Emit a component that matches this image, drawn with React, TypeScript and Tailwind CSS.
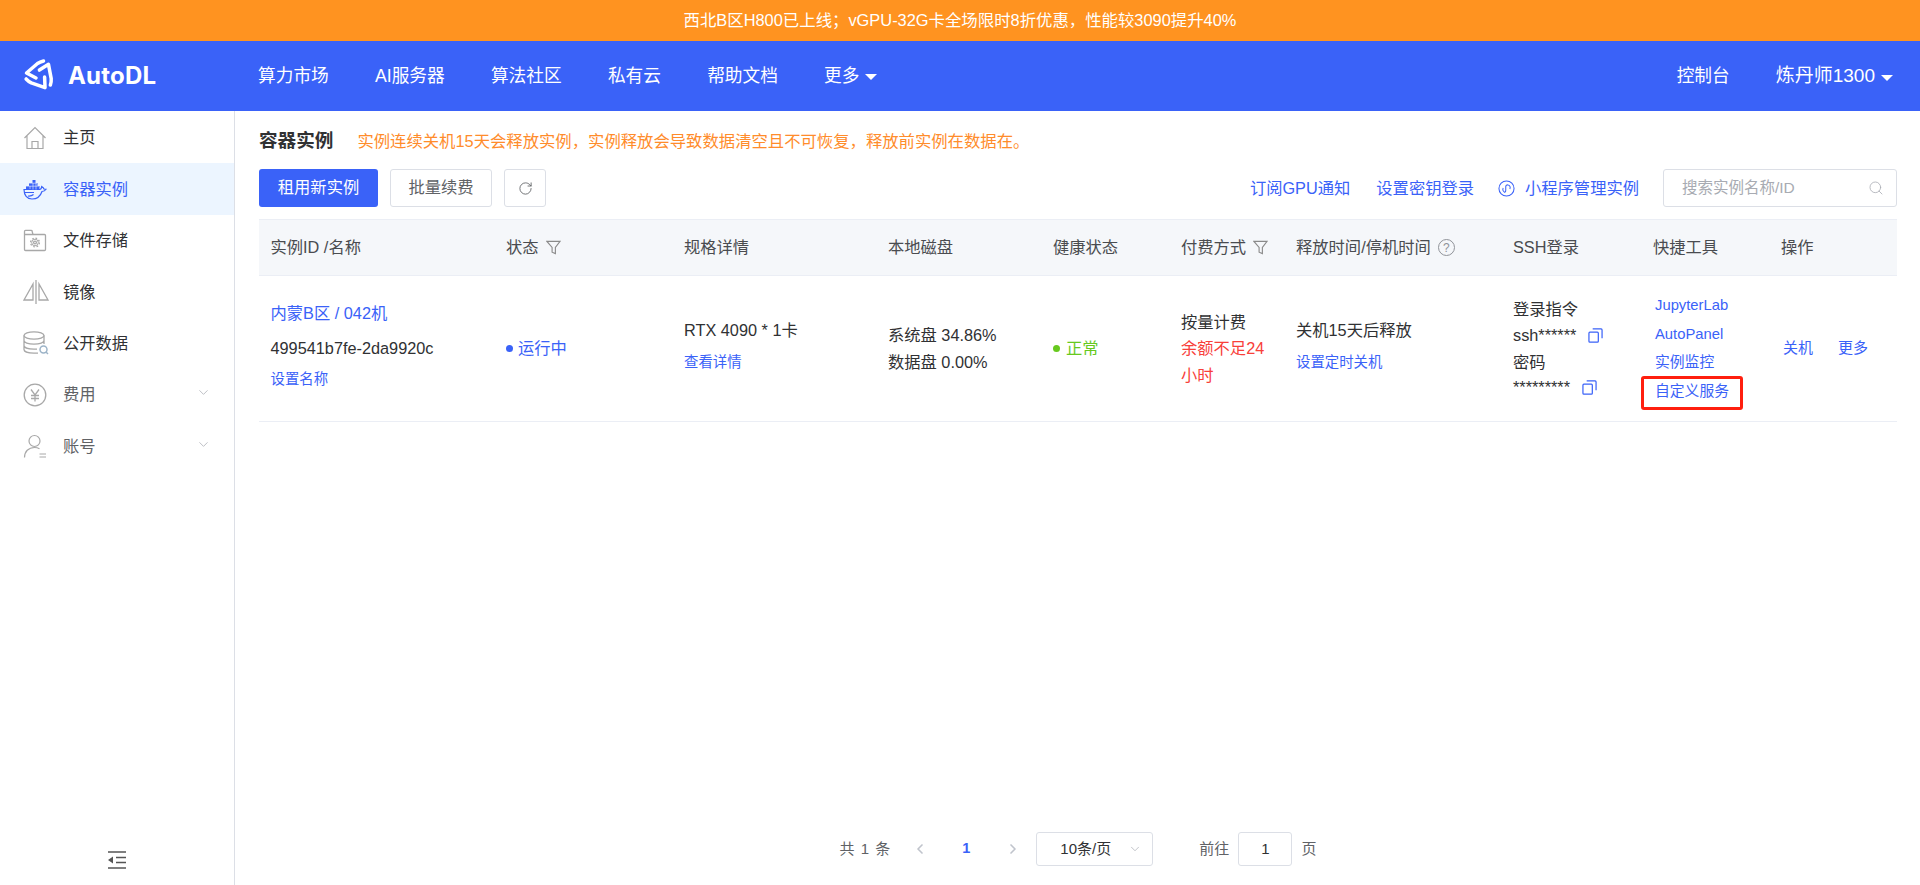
import { ChevronDown, ChevronLeft, ChevronRight, RotateCw, Search } from "lucide-react"
import type { ReactNode } from "react"

const font = "font-['Liberation_Sans','Noto_Sans_CJK_SC',sans-serif]"

const blade = "M14 20 L4.500 15 L15.500 5.500 Q18 3.800 21.500 3"

function Logo() {
  return (
    <svg viewBox="0 0 36 36" className="w-[36px] h-[36px]" fill="none" stroke="#fff" strokeWidth="3.500" strokeLinejoin="round" strokeLinecap="round">
      <path d={blade} />
      <path d={blade} transform="rotate(120 18 17)" />
      <path d={blade} transform="rotate(240 18 17)" />
    </svg>
  )
}

function HomeIcon() {
  return (
    <svg viewBox="0 0 24 24" className="w-[24px] h-[24px]" fill="none" stroke="#a8a8a8" strokeWidth="1.2">
      <path d="M1.500 12 12 1.500 22.500 12M4 10v12.500h16V10M9 22.500v-7h6v7" />
    </svg>
  )
}

function DockerIcon() {
  return (
    <svg viewBox="0 0 24 24" className="w-[24px] h-[24px]" fill="none" stroke="#3a62f8" strokeWidth="1.2">
      <path d="M1 12.500h15.500c1.300 0 2-1 2.200-3 1 .5 2 1.500 2.300 2.500l2 .3c-1 1.700-2.500 2.200-4 2.200C17.500 19 13.500 22 9 22 4 22 1 18 1 12.500Z" />
      <path d="M2 15.500h9M5 19c2 .2 4-.2 5.500-1.500" />
      <path d="M9.500 3h3v3h2v3h2v3.500H3V9h3V6h3.500Z" fill="#3a62f8" stroke="none" />
      <path d="M3 9.200h13M6 6.200h8M7 9v3M10 6v6.500M13 6v6.500" stroke="#ecf5ff" strokeWidth="0.6" />
    </svg>
  )
}

function FolderIcon() {
  return (
    <svg viewBox="0 0 24 24" className="w-[24px] h-[24px]" fill="none" stroke="#a8a8a8" strokeWidth="1.3">
      <path d="M1.500 3.500V21.500c0 .6.400 1 1 1h19c.6 0 1-.4 1-1V7.500c0-.6-.4-1-1-1H10L9 3c0-.4-.4-.7-.8-.7H2.500c-.6 0-1 .5-1 1.200ZM1.500 6.500H10" />
      <circle cx="12" cy="14.500" r="1.400" />
      <circle cx="12" cy="14.500" r="3.300" strokeWidth="1" />
      <circle cx="12" cy="14.500" r="4.400" strokeWidth="1.300" strokeDasharray="1.700 1.750" />
    </svg>
  )
}

function MirrorIcon() {
  return (
    <svg viewBox="0 0 26 24" className="w-[26px] h-[24px]" fill="none" stroke="#a8a8a8" strokeWidth="1.3">
      <path d="M13 0v24M10 4v16H1ZM16 4v16h9Z" />
    </svg>
  )
}

function DataIcon() {
  return (
    <svg viewBox="0 0 26 24" className="w-[26px] h-[24px]" fill="none" stroke="#a8a8a8" strokeWidth="1.3">
      <ellipse cx="11" cy="4.500" rx="10" ry="3.700" />
      <path d="M1 4.500v14c0 2 4 3.700 10 3.700h4M21 4.500V13M1 9.500c0 2 4 3.700 10 3.700s10-1.700 10-3.700M1 14.500c0 2 4 3.700 10 3.700h3" />
      <circle cx="20.500" cy="18.500" r="3.500" stroke="#9db4c8" strokeWidth="1.500" />
      <path d="M23 21l2 2" stroke="#9db4c8" strokeWidth="1.500" />
    </svg>
  )
}

function YuanIcon() {
  return (
    <svg viewBox="0 0 24 24" className="w-[24px] h-[24px]" fill="none" stroke="#a8a8a8" strokeWidth="1.3">
      <circle cx="12" cy="12" r="10.800" />
      <path d="M8 6.500l4 5.500 4-5.500M12 12v6.500M8 12.500h8M8 15.500h8" />
    </svg>
  )
}

function UserIcon() {
  return (
    <svg viewBox="0 0 24 24" className="w-[24px] h-[24px]" fill="none" stroke="#a8a8a8" strokeWidth="1.200">
      <circle cx="11.500" cy="7" r="5.500" />
      <path d="M1.500 23.500c0-6 4-10 10-10 2 0 3.500.4 5 1.200" />
      <path d="M16.500 20h6.500M16.500 23h6.500" strokeWidth="1" />
    </svg>
  )
}

function FilterIcon() {
  return (
    <svg viewBox="0 0 16 16" className="w-[15px] h-[15px] ml-[8px] -translate-x-[1px]" fill="none" stroke="#8a8a8a" strokeWidth="1.200">
      <path d="M1 1.500h14L10 8v6.500L6.500 13V8Z" />
    </svg>
  )
}

function CopyIcon() {
  return (
    <svg viewBox="0 0 16 16" className="w-[15px] h-[15px]" fill="none" stroke="#3a62f8" strokeWidth="1.300">
      <rect x="1" y="4.500" width="10" height="10.500" rx="1" />
      <path d="M5 1h9c.5 0 1 .5 1 1v9" />
    </svg>
  )
}

function MiniIcon() {
  return (
    <svg viewBox="0 0 18 18" className="w-[17px] h-[17px]" fill="none" stroke="#3a62f8" strokeWidth="1.100">
      <circle cx="9" cy="9" r="8" />
      <path d="M10.500 5c-1.500 0-2.300 1-2.300 2.200v3.600c0 1.300-.8 2.200-2 2.200M5.500 8.500C4.500 10 5.500 12.800 7.500 12.800M12.500 9.500c1-1.500 0-4.300-2-4.300" />
    </svg>
  )
}

function CollapseIcon() {
  return (
    <svg viewBox="0 0 20 18" className="w-[20px] h-[18px]" fill="none" stroke="#555" strokeWidth="1.500">
      <path d="M1 1h18M9 6.500h10M9 11.500h10M1 17h18" />
      <path d="M6 5.500v7L1 9Z" fill="#555" stroke="none" />
    </svg>
  )
}

const menu: { icon: ReactNode; label: string; active?: boolean; sub?: boolean }[] = [
  { icon: <HomeIcon />, label: "主页" },
  { icon: <DockerIcon />, label: "容器实例", active: true },
  { icon: <FolderIcon />, label: "文件存储" },
  { icon: <MirrorIcon />, label: "镜像" },
  { icon: <DataIcon />, label: "公开数据" },
  { icon: <YuanIcon />, label: "费用", sub: true },
  { icon: <UserIcon />, label: "账号", sub: true },
]

const navLinks = ["算力市场", "AI服务器", "算法社区", "私有云", "帮助文档"]

function Caret() {
  return <span className="ml-[6px] mt-[3px] inline-block border-x-[6px] border-t-[6px] border-x-transparent border-t-white" />
}

function Link({ children, className = "" }: { children: ReactNode; className?: string }) {
  return <a className={`text-[#3a62f8] ${className}`}>{children}</a>
}

export default function App() {
  return (
    <div className={`h-screen overflow-hidden flex flex-col bg-white text-[16.3px] text-[#303133] ${font}`}>
      <div className="h-[41px] shrink-0 bg-[#ff9320] flex items-center justify-center text-white text-[16.4px]">
        西北B区H800已上线；vGPU-32G卡全场限时8折优惠，性能较3090提升40%
      </div>

      <header className="h-[70px] shrink-0 bg-[#3a62f8] flex items-center text-white text-[17.7px]">
        <div className="w-[258px] pl-[22px] flex items-center gap-[10px]">
          <Logo />
          <span className="font-['Inter',sans-serif] font-bold text-[24px] tracking-[0.2px]">AutoDL</span>
        </div>
        <nav className="flex items-center gap-[46.200px]">
          {navLinks.map((item) => (
            <a key={item}>{item}</a>
          ))}
          <a className="flex items-center">
            更多
            <Caret />
          </a>
        </nav>
        <div className="ml-auto flex items-center pr-[27px] gap-[46px]">
          <a>控制台</a>
          <a className="flex items-center text-[19px]">
            炼丹师1300
            <Caret />
          </a>
        </div>
      </header>

      <div className="flex-1 flex min-h-0">
        <aside className="w-[235px] shrink-0 border-r border-[#dcdfe6] flex flex-col pt-[1px]">
          {menu.map((item) => (
            <div
              key={item.label}
              className={`h-[51.4px] flex items-center pl-[23px] pr-[23px] ${item.active ? "bg-[#ecf5ff] text-[#3a62f8]" : ""}`}
            >
              <span className="w-[40px] shrink-0">{item.icon}</span>
              <span className={item.sub ? "text-[#606266]" : ""}>{item.label}</span>
              {item.sub && <ChevronDown className="ml-auto w-[15px] h-[15px] -mt-[4px] text-[#a8abb2]" strokeWidth={1.2} />}
            </div>
          ))}
          <div className="mt-auto mb-[16px] flex justify-center">
            <CollapseIcon />
          </div>
        </aside>

        <main className="flex-1 min-w-0 flex flex-col pl-[24px] pr-[23px]">
          <div className="flex items-center h-[58px] pt-[2px]">
            <h1 className="font-bold text-[18.6px] text-[#303133]">容器实例</h1>
            <p className="ml-[24px] text-[#ff8c2b] text-[16.35px]">
              实例连续关机15天会释放实例，实例释放会导致数据清空且不可恢复，释放前实例在数据在。
            </p>
          </div>

          <div className="flex items-center h-[38px]">
            <button className="w-[119px] h-[38px] pb-[1px] rounded-[3px] bg-[#3a62f8] text-white text-[16.3px]">租用新实例</button>
            <button className="ml-[12px] w-[102px] h-[38px] pb-[1px] rounded-[3px] border border-[#dcdfe6] text-[#606266] text-[16.3px]">批量续费</button>
            <button className="ml-[12px] w-[42px] h-[38px] rounded-[3px] border border-[#dcdfe6] flex items-center justify-center text-[#606266]">
              <RotateCw className="w-[15px] h-[15px]" strokeWidth={1.4} />
            </button>
            <div className="ml-auto flex items-center text-[#3a62f8]">
              <a>订阅GPU通知</a>
              <a className="ml-[26px]">设置密钥登录</a>
              <span className="ml-[24px] mr-[10px]">
                <MiniIcon />
              </span>
              <a>小程序管理实例</a>
              <div className="ml-[24px] w-[234px] h-[38px] rounded-[3px] border border-[#dcdfe6] flex items-center pl-[18px] pr-[12px] text-[#a8abb2]">
                <span className="text-[15.5px]">搜索实例名称/ID</span>
                <Search className="ml-auto w-[16px] h-[16px]" strokeWidth={1.2} />
              </div>
            </div>
          </div>

          <table className="mt-[12px] w-full table-fixed border-collapse">
            <colgroup>
              <col className="w-[235px]" />
              <col className="w-[178px]" />
              <col className="w-[204px]" />
              <col className="w-[165px]" />
              <col className="w-[128px]" />
              <col className="w-[115px]" />
              <col className="w-[217px]" />
              <col className="w-[140px]" />
              <col className="w-[128px]" />
              <col className="w-[128px]" />
            </colgroup>
            <thead>
              <tr className="h-[56px] bg-[#f5f7fa] border-y border-[#ebeef5] text-left text-[#4a4c50]">
                <th className="pl-[11.500px] font-normal">实例ID /名称</th>
                <th className="pl-[12px] font-normal">
                  <span className="flex items-center">
                    状态
                    <FilterIcon />
                  </span>
                </th>
                <th className="pl-[12px] font-normal">规格详情</th>
                <th className="pl-[12px] font-normal">本地磁盘</th>
                <th className="pl-[12px] font-normal">健康状态</th>
                <th className="pl-[12px] font-normal">
                  <span className="flex items-center">
                    付费方式
                    <FilterIcon />
                  </span>
                </th>
                <th className="pl-[12px] font-normal">
                  <span className="flex items-center whitespace-nowrap">
                    释放时间/停机时间
                    <span className="ml-[7px] w-[17px] h-[17px] rounded-full border border-[#909399] text-[#909399] text-[12px] flex items-center justify-center">?</span>
                  </span>
                </th>
                <th className="pl-[12px] font-normal">SSH登录</th>
                <th className="pl-[12px] font-normal">快捷工具</th>
                <th className="pl-[12px] font-normal">操作</th>
              </tr>
            </thead>
            <tbody>
              <tr className="h-[146px] border-b border-[#ebeef5]">
                <td className="pl-[11.500px] pb-[5px]">
                  <div className="text-[#3a62f8] leading-[20px] mb-[15px]">内蒙B区 / 042机</div>
                  <div className="leading-[20px] mb-[11px]">499541b7fe-2da9920c</div>
                  <Link className="block leading-[20px] text-[14.4px]">设置名称</Link>
                </td>
                <td className="pl-[12px]">
                  <span className="flex items-center text-[#3a62f8]">
                    <span className="w-[7px] h-[7px] rounded-full bg-[#3a62f8] mr-[5px]" />
                    运行中
                  </span>
                </td>
                <td className="pl-[12px] pb-[5px]">
                  <div className="leading-[32.500px]">RTX 4090 * 1卡</div>
                  <Link className="block leading-[32.500px] text-[14.4px]">查看详情</Link>
                </td>
                <td className="pl-[12px]">
                  <div className="leading-[27px]">系统盘 34.86%</div>
                  <div className="leading-[27px]">数据盘 0.00%</div>
                </td>
                <td className="pl-[12px]">
                  <span className="flex items-center text-[#67c91e]">
                    <span className="w-[7px] h-[7px] rounded-full bg-[#67c91e] mr-[6px]" />
                    正常
                  </span>
                </td>
                <td className="pl-[12px] leading-[26.500px]">
                  <div>按量计费</div>
                  <div className="text-[#f8403a] w-[92px]">余额不足24小时</div>
                </td>
                <td className="pl-[12px] pb-[5px]">
                  <div className="leading-[32.500px]">关机15天后释放</div>
                  <Link className="block leading-[32.500px] text-[14.4px]">设置定时关机</Link>
                </td>
                <td className="pl-[12px] leading-[27px]">
                  <div>登录指令</div>
                  <div className="flex items-center gap-[12px] -mt-[1px]">
                    ssh******
                    <CopyIcon />
                  </div>
                  <div>密码</div>
                  <div className="flex items-center gap-[12px] -mt-[2px]">
                    *********
                    <CopyIcon />
                  </div>
                </td>
                <td className="pl-[14px]">
                  <div className="flex flex-col gap-[8.500px] leading-[20px] text-[14.800px] -mt-[1px]">
                    <Link>JupyterLab</Link>
                    <Link>AutoPanel</Link>
                    <Link>实例监控</Link>
                    <span className="relative">
                      <Link>自定义服务</Link>
                      <span className="absolute -left-[14px] -top-[5px] w-[102px] h-[34px] border-[3px] border-[#ff1f0f] rounded-[3px]" />
                    </span>
                  </div>
                </td>
                <td className="pl-[14px] text-[15px]">
                  <span className="flex gap-[25px]">
                    <Link>关机</Link>
                    <Link>更多</Link>
                  </span>
                </td>
              </tr>
            </tbody>
          </table>

          <div className="mt-auto mb-[19px] h-[34px] flex items-center justify-center text-[15px] text-[#606266]">
            <span className="tracking-[1px]">共 1 条</span>
            <ChevronLeft className="ml-[21px] w-[16px] h-[16px] text-[#c0c4cc]" strokeWidth={2.500} />
            <span className="ml-[34px] text-[#3a62f8] font-bold text-[14.500px]">1</span>
            <ChevronRight className="ml-[35px] w-[16px] h-[16px] text-[#c0c4cc]" strokeWidth={2.500} />
            <div className="ml-[15px] w-[117px] h-[34px] rounded-[3px] border border-[#dcdfe6] flex items-center pl-[23px] pr-[10px] text-[#303133]">
              10条/页
              <ChevronDown className="ml-auto w-[14px] h-[14px] text-[#a8abb2]" strokeWidth={1.2} />
            </div>
            <span className="ml-[46px]">前往</span>
            <div className="ml-[9px] w-[54px] h-[34px] rounded-[3px] border border-[#dcdfe6] flex items-center justify-center text-[#303133]">1</div>
            <span className="ml-[9px]">页</span>
          </div>
        </main>
      </div>
    </div>
  )
}
